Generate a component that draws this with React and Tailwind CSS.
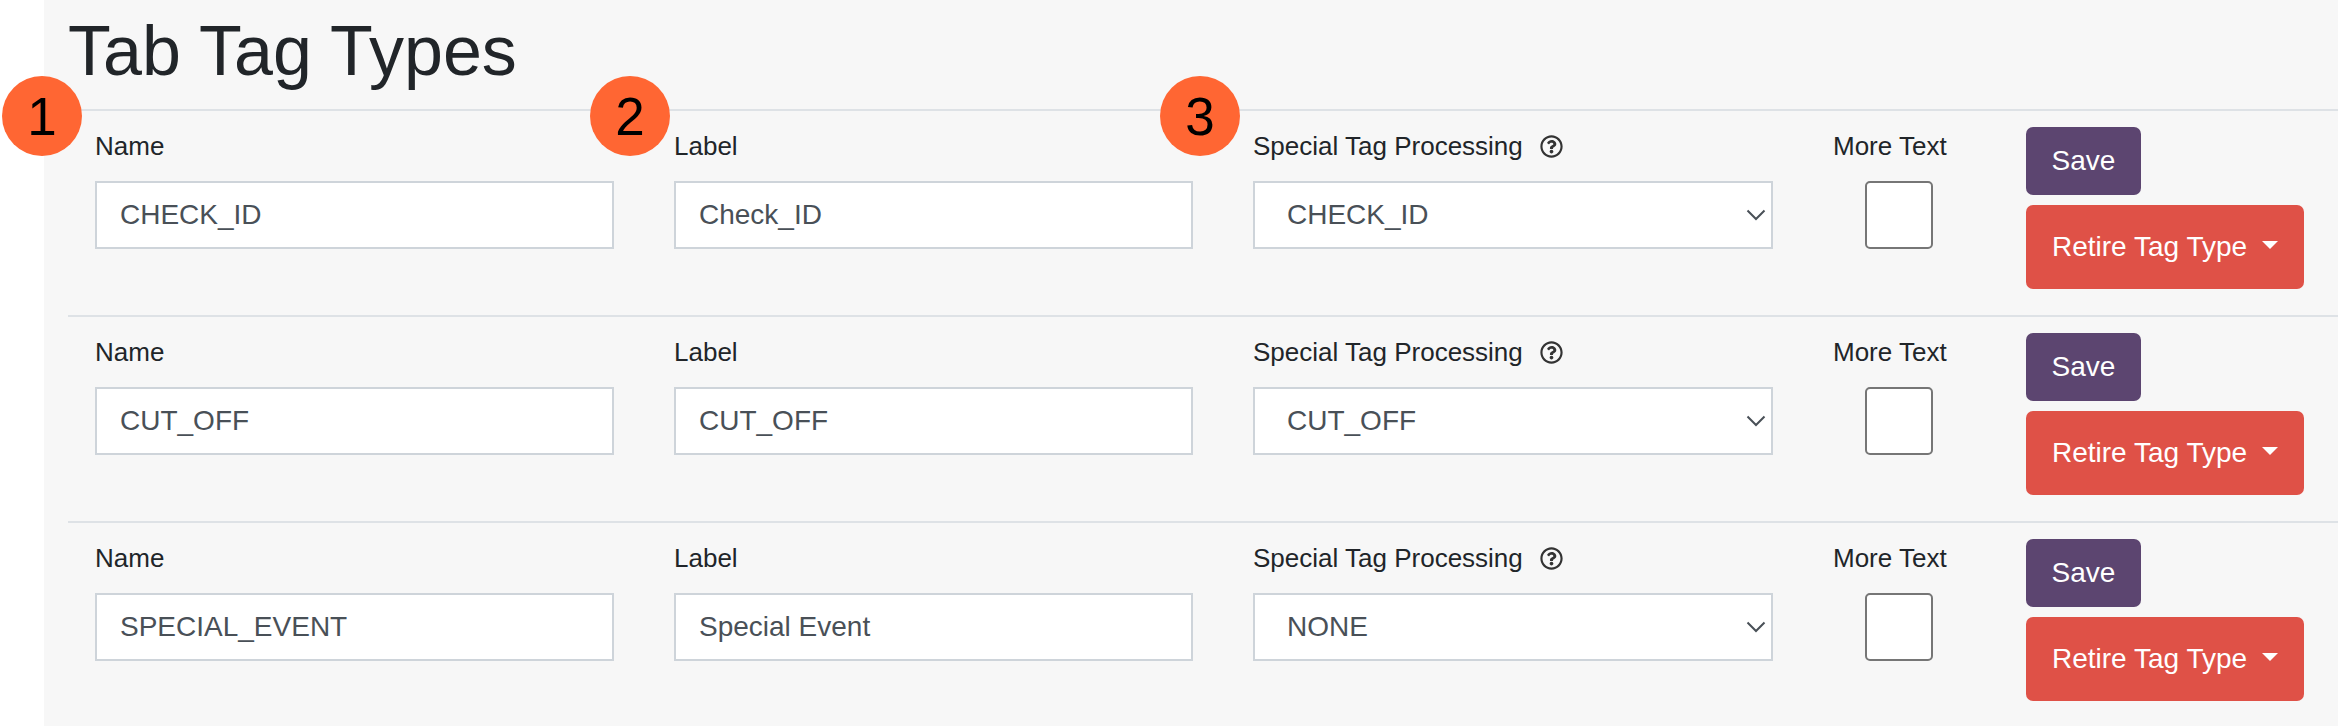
import React from "react";
import { FaRegQuestionCircle } from "react-icons/fa";

const rows = [
  { name: "CHECK_ID", label: "Check_ID", special: "CHECK_ID" },
  { name: "CUT_OFF", label: "CUT_OFF", special: "CUT_OFF" },
  { name: "SPECIAL_EVENT", label: "Special Event", special: "NONE" },
];

const labelCls = "block h-[37px] mb-[16px] text-[26px] leading-[37px] text-[#212529] whitespace-nowrap";
const fieldCls =
  "block w-[519px] h-[68px] border-2 border-[#ced4da] bg-white text-[28px] text-[#495057] outline-none";

function Badge({ n, className }) {
  return (
    <div
      className={
        "absolute top-[76px] w-[80px] h-[80px] rounded-full bg-[#ff6633] flex items-center justify-center text-[53px] leading-none text-black " +
        className
      }
    >
      {n}
    </div>
  );
}

function Row({ row }) {
  return (
    <div className="flex h-[206px] border-t-2 border-[#dee2e6] pl-[27px] pt-[17px]">
      <div className="w-[519px]">
        <label className={labelCls}>Name</label>
        <input readOnly value={row.name} className={fieldCls + " pl-[23px]"} />
      </div>
      <div className="w-[519px] ml-[60px]">
        <label className={labelCls}>Label</label>
        <input readOnly value={row.label} className={fieldCls + " pl-[23px]"} />
      </div>
      <div className="w-[520px] ml-[60px]">
        <label className={labelCls + " flex items-center"}>
          Special Tag Processing
          <FaRegQuestionCircle className="ml-[17px] w-[23px] h-[23px] text-[#333333]" />
        </label>
        <div className="relative">
          <select
            value={row.special}
            onChange={() => {}}
            className={fieldCls + " w-[520px] pl-[32px] appearance-none rounded-none"}
          >
            <option value={row.special}>{row.special}</option>
          </select>
          <svg
            className="absolute right-[7px] top-[28px] w-[20px] h-[12px]"
            viewBox="0 0 20 12"
            fill="none"
            stroke="#495057"
            strokeWidth="2"
          >
            <path d="M1.5 1.5 L10 10 L18.500 1.5" />
          </svg>
        </div>
      </div>
      <div className="w-[113px] ml-[60px]">
        <label className={labelCls}>More Text</label>
        <div className="ml-[32px] w-[68px] h-[68px] bg-white border-2 border-[#767676] rounded-[5px]" />
      </div>
      <div className="ml-[80px] -mt-px flex flex-col items-start gap-[10px]">
        <button className="h-[68px] w-[115px] bg-[#5c4570] text-white text-[28px] rounded-[7px]">Save</button>
        <button className="h-[84px] w-[278px] bg-[#df5147] text-white text-[28px] rounded-[7px] flex items-center pl-[26px]">
          Retire Tag Type
          <span className="ml-[15px] -mt-[5px] w-0 h-0 border-x-[8.5px] border-x-transparent border-t-[8.5px] border-t-white" />
        </button>
      </div>
    </div>
  );
}

export default function App() {
  return (
    <div className="relative h-[726px] overflow-hidden bg-white font-['Liberation_Sans',Arial,sans-serif]">
      <div className="ml-[44px] h-full bg-[#f7f7f7] pl-[24px] pt-[9px]">
        <h1 className="text-[70px] leading-[84px] font-normal text-[#212529] mb-[16px]">Tab Tag Types</h1>
        {rows.map((r) => (
          <Row key={r.name} row={r} />
        ))}
      </div>
      <Badge n="1" className="left-[2px]" />
      <Badge n="2" className="left-[590px]" />
      <Badge n="3" className="left-[1160px]" />
    </div>
  );
}
